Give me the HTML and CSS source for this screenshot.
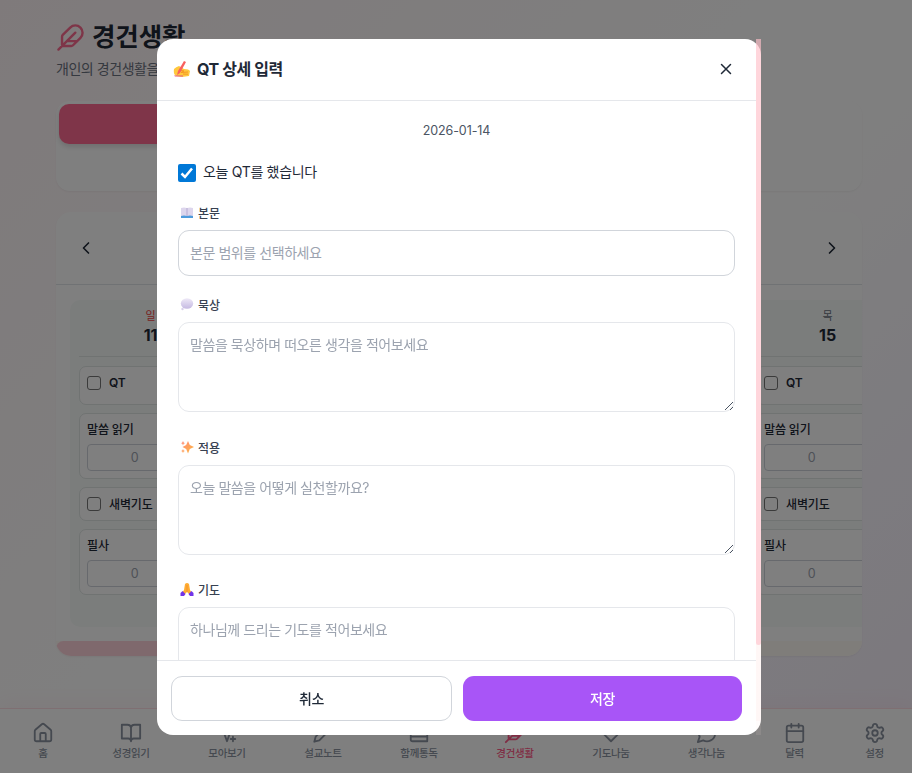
FILE: index.html
```html
<!DOCTYPE html>
<html lang="ko">
<head>
<meta charset="utf-8">
<title>경건생활</title>
<link rel="stylesheet" href="styles.css">
</head>
<body>
<svg class="defs" aria-hidden="true">
  <symbol id="feather" viewBox="0 0 24 24"><path d="M12.67 19a2 2 0 0 0 1.416-.588l6.154-6.172a6 6 0 0 0-8.49-8.49L5.586 9.914A2 2 0 0 0 5 11.328V18a1 1 0 0 0 1 1zM16 8 2 22M17.5 15H9"/></symbol>
  <linearGradient id="flame" x1="0" y1="0" x2="1" y2="1"><stop offset="0" stop-color="#ff8b7c"/><stop offset="1" stop-color="#ffb83d"/></linearGradient>
  <linearGradient id="mist" x1="0" y1="0" x2="0" y2="1"><stop offset="0" stop-color="#eee9f7"/><stop offset="1" stop-color="#c5b9e2"/></linearGradient>
</svg>
<div class="page">
  <main class="main">
    <header class="title"><svg class="icon"><use href="#feather"/></svg><h1>경건생활</h1></header>
    <p class="subtitle">개인의 경건생활을</p>
    <div class="tabs"><div class="tab-active"></div></div>
    <section class="week">
      <div class="week-nav">
        <svg class="icon" viewBox="0 0 24 24"><path d="m15 18-6-6 6-6"/></svg>
        <svg class="icon" viewBox="0 0 24 24"><path d="m9 18 6-6-6-6"/></svg>
      </div>
      <div class="days">
        <article class="day sunday">
          <div class="day-head"><span>일</span><b>11</b></div>
          <div class="check qt"><i></i>QT</div>
          <div class="count"><label>말씀 읽기</label><div>0</div></div>
          <div class="check"><i></i>새벽기도</div>
          <div class="count"><label>필사</label><div>0</div></div>
        </article>
        <article class="day"></article>
        <article class="day"></article>
        <article class="day"></article>
        <article class="day">
          <div class="day-head"><span>목</span><b>15</b></div>
          <div class="check qt"><i></i>QT</div>
          <div class="count"><label>말씀 읽기</label><div>0</div></div>
          <div class="check"><i></i>새벽기도</div>
          <div class="count"><label>필사</label><div>0</div></div>
        </article>
      </div>
      <div class="week-scroll"><div></div></div>
    </section>
  </main>
  <nav class="nav">
    <a><svg class="icon" viewBox="0 0 24 24"><path d="M15 21v-8a1 1 0 0 0-1-1h-4a1 1 0 0 0-1 1v8M3 10a2 2 0 0 1 .709-1.528l7-6a2 2 0 0 1 2.582 0l7 6A2 2 0 0 1 21 10v9a2 2 0 0 1-2 2H5a2 2 0 0 1-2-2z"/></svg>홈</a>
    <a><svg class="icon" viewBox="0 0 24 24"><path d="M12 5v16M2 3h6a4 4 0 0 1 4 3 4 4 0 0 1 4-3h6v15h-7a3 3 0 0 0-3 3 3 3 0 0 0-3-3H2z"/></svg>성경읽기</a>
    <a><svg class="icon" viewBox="0 0 24 24"><path d="m9.500 14 2.500 7 2.500-7M18.500 16v5M16 18.500h5M12 3l2 7h6"/></svg>모아보기</a>
    <a><svg class="icon" viewBox="0 0 24 24"><path d="M17 3a2.800 2.800 0 0 1 4 4L8 20l-5.500 1.500L4 16Z"/></svg>설교노트</a>
    <a><svg class="icon" viewBox="0 0 24 24"><path d="M3 19V4.500A2.500 2.500 0 0 1 5.500 2H21v19H5a2 2 0 0 1-2-2M3 16h18"/></svg>함께통독</a>
    <a class="active"><svg class="icon"><use href="#feather"/></svg>경건생활</a>
    <a><svg class="icon" viewBox="0 0 24 24"><path d="M19 14c1.500-1.500 3-3.200 3-5.500A5.500 5.500 0 0 0 16.500 3c-1.800 0-3 .5-4.500 2-1.500-1.500-2.700-2-4.500-2A5.500 5.500 0 0 0 2 8.500c0 2.300 1.500 4 3 5.500l7 7Z"/></svg>기도나눔</a>
    <a><svg class="icon" viewBox="0 0 24 24"><path d="M7.900 20A9 9 0 1 0 4 16.100L2 22Z"/></svg>생각나눔</a>
    <a><svg class="icon" viewBox="0 0 24 24"><path d="M8 2v4M16 2v4M3 10h18"/><rect x="3" y="4" width="18" height="18" rx="2"/></svg>달력</a>
    <a><svg class="icon" viewBox="0 0 24 24"><path d="M9.671 4.136a2.340 2.340 0 0 1 4.659 0 2.340 2.340 0 0 0 3.319 1.915 2.340 2.340 0 0 1 2.330 4.033 2.340 2.340 0 0 0 0 3.831 2.340 2.340 0 0 1-2.330 4.033 2.340 2.340 0 0 0-3.319 1.915 2.340 2.340 0 0 1-4.659 0 2.340 2.340 0 0 0-3.320-1.915 2.340 2.340 0 0 1-2.330-4.033 2.340 2.340 0 0 0 0-3.831A2.340 2.340 0 0 1 6.350 6.051a2.340 2.340 0 0 0 3.319-1.915"/><circle cx="12" cy="12" r="3"/></svg>설정</a>
  </nav>
</div>
<div class="overlay">
  <div class="modal">
    <div class="modal-main">
      <header class="modal-head">
        <svg class="emoji" viewBox="0 0 18 18"><path fill="#ffc83d" d="M1 9q2-2 5-3l5 3q5 0 6 2l-1 5-7 1-6-1q-3-2-2-7"/><path d="m7 10 4 1-3 1.500 7-.5M10 14l5 .2" fill="none" stroke="#f59722"/><path fill="#f8605f" d="m11 1 2 1-6 11-3 2 1-4z"/><path fill="#e45c82" d="M1 15.500h9v1H2z"/></svg>
        <h2>QT 상세 입력</h2>
        <svg class="icon close" viewBox="0 0 24 24"><path d="M18 6 6 18M6 6l12 12"/></svg>
      </header>
      <div class="form">
        <div class="date">2026-01-14</div>
        <div class="done"><span class="box"><svg viewBox="0 0 18 18"><path d="m3.500 9.500 3.500 3.500L14 4.500"/></svg></span><span class="done-text">오늘 QT를 했습니다</span></div>
        <div class="label"><svg class="emoji" viewBox="0 0 14 14"><path fill="#4e9bdc" d="M1 4h12v9H1z"/><path fill="#ddd6ed" d="M1 3q3-1 6 0 3-1 6 0v8q-3-1-6 0-3-1-6 0z"/><path d="M7 3v8" stroke="#b5aad2"/></svg>본문</div>
        <div class="field input">본문 범위를 선택하세요</div>
        <div class="label"><svg class="emoji" viewBox="0 0 14 14"><ellipse cx="7" cy="6.500" rx="6.200" ry="5.200" fill="url(#mist)"/><circle cx="2.500" cy="12" r="1.200" fill="#d8d0eb"/></svg>묵상</div>
        <div class="field area">말씀을 묵상하며 떠오른 생각을 적어보세요<svg class="grip" viewBox="0 0 10 10"><path d="M1 9 9 1M6 9l3-3"/></svg></div>
        <div class="label"><svg class="emoji" viewBox="0 0 14 14"><path fill="url(#flame)" d="m8 1 1.800 4L14 7 9.800 9 8 13.500 6.200 9 2.500 7l3.700-2zM3 1l.7 1.600L5 3.200l-1.300.6L3 5.500l-.7-1.700L1 3.200l1.300-.6zM3 9l.7 1.500 1.300.5-1.300.6L3 13l-.7-1.400L1 11l1.300-.5z"/></svg>적용</div>
        <div class="field area">오늘 말씀을 어떻게 실천할까요?<svg class="grip" viewBox="0 0 10 10"><path d="M1 9 9 1M6 9l3-3"/></svg></div>
        <div class="label"><svg class="emoji" viewBox="0 0 14 14"><path fill="#ffad32" d="M5 2q2-2 4 0l1 6 2 3-3 1-2-2-2 2-3-1 2-3z"/><path d="M7 3v7" stroke="#ef862d" stroke-width=".7"/><path fill="#7135e8" d="m2.500 9 3 3L4 14H.500v-3zM11.500 9l-3 3 1.500 2h3.500v-3z"/></svg>기도</div>
        <div class="field area">하나님께 드리는 기도를 적어보세요</div>
      </div>
      <footer class="actions"><button class="cancel">취소</button><button class="save">저장</button></footer>
    </div>
    <div class="modal-scroll"><div></div></div>
  </div>
</div>
</body>
</html>
```

FILE: styles.css
```css
* { box-sizing: border-box; }
body { margin: 0; font-family: Inter, "Noto Sans CJK KR", sans-serif; color: #1f2937; overflow: hidden; }
.defs { position: absolute; width: 0; height: 0; }
.icon { fill: none; stroke: currentColor; stroke-width: 2; stroke-linecap: round; stroke-linejoin: round; flex: none; }
h1, h2, p { margin: 0; }

.page { height: 773px; display: flex; flex-direction: column; background: linear-gradient(135deg, #fff5f7 0%, #fffefe 45%, #fffefe 60%, #faf7ff 80%, #f8f0fa 100%); }
.main { flex: 1; min-height: 0; padding: 20px 50px 0 56px; }
.title { display: flex; align-items: center; gap: 7px; height: 34px; }
.title .icon { width: 29px; height: 29px; color: #fc6b90; }
.title h1 { font-size: 25.500px; line-height: 34px; font-weight: 700; letter-spacing: -.1px; }
.subtitle { margin-top: 5px; height: 20px; font-size: 14px; line-height: 20px; letter-spacing: -.45px; color: #6b7280; }
.tabs { margin-top: 22px; height: 90px; padding: 3px; border-radius: 14px; background: #fff; box-shadow: 0 1px 2px rgba(0,0,0,.05); }
.tab-active { width: 50%; height: 40px; border-radius: 10px; background: #ff6b93; box-shadow: 0 3px 5px rgba(0,0,0,.13); }
.week { margin-top: 21px; height: 444px; border-radius: 15px; background: #fff; overflow: hidden; box-shadow: 0 1px 2px rgba(0,0,0,.05); }
.week-nav { height: 73px; padding: 0 20px; display: flex; align-items: center; justify-content: space-between; border-bottom: 1px solid #e1e4e8; }
.week-nav .icon { width: 20px; height: 20px; }
.days { height: 356px; padding: 15px 14px 14px; display: flex; gap: 8px; overflow: hidden; }
.day { flex: none; width: 161.250px; padding: 9px; border-radius: 10px; background: #f7fbf9; }
.day-head { height: 48px; margin-bottom: 9px; text-align: center; border-bottom: 1px solid #e0e6e4; }
.day-head span { display: block; font-size: 11px; line-height: 14px; color: #6b7280; }
.day-head b { display: block; font-size: 16px; line-height: 25px; }
.sunday .day-head span { color: #ef4444; }
.check, .count { border: 1px solid #e0e6e4; border-radius: 7px; background: #fff; font-size: 12px; font-weight: 500; letter-spacing: -.15px; }
.check { height: 34px; padding: 0 7px 1px; display: flex; align-items: center; gap: 8px; }
.check.qt { height: 39px; padding-bottom: 6px; font-weight: 600; }
.check i { width: 14px; height: 14px; border: 1px solid #767676; border-radius: 3px; }
.count { height: 66px; margin: 8px 0; padding: 7px; }
.count label { display: block; height: 18px; line-height: 18px; }
.count div { width: 110px; height: 27px; margin-top: 5px; padding-right: 15px; border: 1px solid #ced3da; border-radius: 4px; line-height: 25px; font-weight: 400; font-size: 12.500px; text-align: center; color: #9ca3af; }
.week-scroll { height: 15px; background: #fffaf5; }
.week-scroll div { width: 550px; height: 15px; border-radius: 8px; background: #ffd3db; }

.nav { height: 65px; padding: 13px 0 0 3px; display: grid; grid-template-columns: 80px repeat(6, 96px) 95px 81px 79px; background: #fff; border-top: 1px solid #ffdfe5; font-size: 10.500px; font-weight: 500; letter-spacing: -.3px; color: #8b93a0; box-shadow: 0 -5px 18px rgba(255,107,147,.06); }
.nav a { display: flex; flex-direction: column; align-items: center; line-height: 20px; }
.nav .icon { width: 22px; height: 22px; }
.nav .active { color: #ff5b88; }

.overlay { position: fixed; inset: 0; background: rgba(0,0,0,.5); display: flex; padding: 39px 0 0 157px; }
.modal { width: 604px; height: 696px; display: flex; background: #fff; border-radius: 16px; }
.modal-main { width: 599px; display: flex; flex-direction: column; }
.modal-head { height: 62px; flex: none; padding: 0 21px 2px 16px; display: flex; align-items: center; border-bottom: 1px solid #e5e7eb; }
.modal-head .emoji { width: 18px; height: 18px; }
.modal-head h2 { margin-left: 6px; font-size: 16px; font-weight: 700; line-height: 24px; letter-spacing: -.4px; }
.modal-head .close { width: 18px; height: 18px; margin-left: auto; }
.form { flex: 1; min-height: 0; overflow: hidden; padding: 20px 21px 0; }
.date { height: 20px; font-size: 12.500px; line-height: 20px; text-align: center; letter-spacing: -.1px; color: #4b5563; }
.done { height: 18px; margin-top: 23px; display: flex; align-items: center; font-size: 14px; letter-spacing: -.32px; }
.done-text { line-height: 18px; padding-bottom: 2px; }
.box { width: 18px; height: 18px; margin-right: 7px; border-radius: 2px; background: #0078d7; }
.box svg { display: block; fill: none; stroke: #fff; stroke-width: 2.500; }
.label { height: 20px; margin: 20px 0 8px 2px; display: flex; align-items: center; gap: 4px; font-size: 12px; font-weight: 500; color: #374151; }
.label .emoji { width: 14px; height: 14px; }
.field { width: 557px; padding: 0 11px; border: 1px solid #e5e7eb; border-radius: 11px; font-size: 14px; line-height: 20px; letter-spacing: -.43px; color: #9ca3af; }
.input { height: 46px; padding-top: 12px; border-color: #d1d5db; }
.input + .label { margin-top: 18px; margin-bottom: 8px; }
.area { height: 90px; padding-top: 12px; position: relative; }
.area + .label { margin-top: 25px; margin-bottom: 8px; }
.area + .label + .area + .label { margin-top: 24px; }
.grip { position: absolute; right: 0; bottom: 0; width: 10px; height: 10px; fill: none; stroke: #4b5563; }
.actions { height: 75px; flex: none; padding: 15px 14px 0; display: flex; gap: 11px; border-top: 1px solid #e5e7eb; }
.actions button { height: 45px; border-radius: 11px; font: 500 14px/20px Inter, "Noto Sans CJK KR", sans-serif; letter-spacing: -.3px; }
.cancel { width: 281px; border: 1px solid #d1d5db; background: #fff; color: #1f2937; }
.save { width: 279px; border: 0; background: #a855f7; color: #fff; }
.modal-scroll { width: 5px; height: 696px; background: linear-gradient(rgba(255,228,225,.3) 682px, rgba(255,228,225,.1) 682px); }
.modal-scroll div { height: 606px; border-radius: 0 0 3px 3px; background: rgba(255,182,193,.5); }
```
